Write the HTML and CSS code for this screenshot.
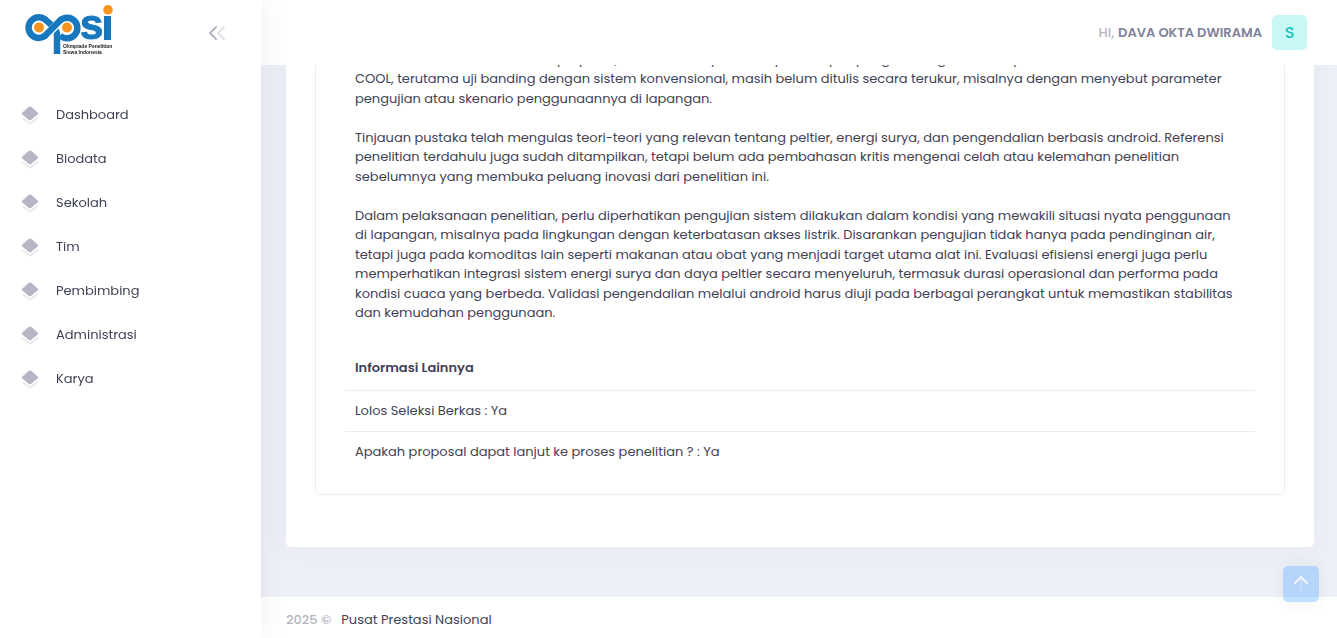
FILE: index.html
```html
<!DOCTYPE html>
<html lang="id">
<head>
    <meta charset="UTF-8">
    <meta name="viewport" content="width=device-width, initial-scale=1.0">
    <title>OPSI - Olimpiade Penelitian Siswa Indonesia</title>
    <link rel="stylesheet" href="styles.css">
</head>
<body>
    <svg class="sprite" aria-hidden="true">
        <symbol id="layers" viewBox="0 0 24 24">
            <path d="M13.200 2.200l8 6.800a1.500 1.500 0 0 1 0 2.400l-8 6.600a1.800 1.800 0 0 1-2.400 0L2.800 11.400a1.500 1.500 0 0 1 0-2.400l8-6.800a1.800 1.800 0 0 1 2.400 0z" fill="#b5b5c3"/>
            <path d="M3 15.500l8 6.200a1.600 1.600 0 0 0 2 0L21 15.500" fill="none" stroke="#e6e6ec" stroke-width="1.800"/>
        </symbol>
    </svg>

    <!-- Sidebar -->
    <aside class="sidebar">
        <div class="brand">
            <a href="#" class="brand-link" aria-label="OPSI">
                <svg class="logo" viewBox="0 0 90 54">
                    <g fill="none" stroke="#1878be" stroke-width="6.500">
                        <path d="M20.500 30.500A10.300 10.300 0 1 1 21 15.200C26 19.500 32 24 32 30V49"/>
                        <path d="M35 15.500A10.300 10.300 0 1 1 35 30.500"/>
                        <path d="M22 29.500L34.500 17" stroke="#fff" stroke-width="8"/>
                        <path d="M19 31.700L36.500 14"/>
                    </g>
                    <circle cx="14" cy="22.500" r="5" fill="#f7941e"/>
                    <circle cx="42" cy="22.500" r="5" fill="#f7941e"/>
                    <text x="55" y="34" class="logo-letter">s</text>
                    <rect x="79" y="11" width="7" height="24" fill="#1878be"/>
                    <circle cx="83" cy="4.800" r="4.800" fill="#f7941e"/>
                    <text x="38" y="43" class="logo-small">Olimpiade Penelitian</text>
                    <text x="38" y="49" class="logo-small">Siswa Indonesia</text>
                </svg>
            </a>
            <button class="toggle" type="button" aria-label="Toggle menu">
                <svg viewBox="0 0 20 20" fill="none" stroke-width="2" stroke-linecap="round" stroke-linejoin="round">
                    <path d="M9 4L3 10l6 6" stroke="#b5b5c3"/>
                    <path d="M17 4l-6 6 6 6" stroke="#e1e1e8"/>
                </svg>
            </button>
        </div>
        <nav class="menu">
            <a href="#" class="menu-link"><svg class="menu-icon"><use href="#layers"/></svg>Dashboard</a>
            <a href="#" class="menu-link"><svg class="menu-icon"><use href="#layers"/></svg>Biodata</a>
            <a href="#" class="menu-link"><svg class="menu-icon"><use href="#layers"/></svg>Sekolah</a>
            <a href="#" class="menu-link"><svg class="menu-icon"><use href="#layers"/></svg>Tim</a>
            <a href="#" class="menu-link"><svg class="menu-icon"><use href="#layers"/></svg>Pembimbing</a>
            <a href="#" class="menu-link"><svg class="menu-icon"><use href="#layers"/></svg>Administrasi</a>
            <a href="#" class="menu-link"><svg class="menu-icon"><use href="#layers"/></svg>Karya</a>
        </nav>
    </aside>

    <div class="wrapper">
        <!-- Header -->
        <header class="header">
            <a href="#" class="user">
                <span class="user-hi">Hi,</span>
                <span class="user-name">DAVA OKTA DWIRAMA</span>
                <span class="user-symbol">S</span>
            </a>
        </header>

        <!-- Content -->
        <main class="content">
            <div class="card">
                <div class="panel">
                    <div class="review">
                        <p>Catatan penilaian proposal:<br>Rumusan masalah dan isi dari proposal, namun hasilnya belum pada aspek pengembangan sistem pada<br>COOL, terutama uji banding dengan sistem konvensional, masih belum ditulis secara terukur, misalnya dengan menyebut parameter<br>pengujian atau skenario penggunaannya di lapangan.</p>
                        <p>Tinjauan pustaka telah mengulas teori-teori yang relevan tentang peltier, energi surya, dan pengendalian berbasis android. Referensi<br>penelitian terdahulu juga sudah ditampilkan, tetapi belum ada pembahasan kritis mengenai celah atau kelemahan penelitian<br>sebelumnya yang membuka peluang inovasi dari penelitian ini.</p>
                        <p>Dalam pelaksanaan penelitian, perlu diperhatikan pengujian sistem dilakukan dalam kondisi yang mewakili situasi nyata penggunaan<br>di lapangan, misalnya pada lingkungan dengan keterbatasan akses listrik. Disarankan pengujian tidak hanya pada pendinginan air,<br>tetapi juga pada komoditas lain seperti makanan atau obat yang menjadi target utama alat ini. Evaluasi efisiensi energi juga perlu<br>memperhatikan integrasi sistem energi surya dan daya peltier secara menyeluruh, termasuk durasi operasional dan performa pada<br>kondisi cuaca yang berbeda. Validasi pengendalian melalui android harus diuji pada berbagai perangkat untuk memastikan stabilitas<br>dan kemudahan penggunaan.</p>
                    </div>
                    <table class="info">
                        <thead>
                            <tr><th>Informasi Lainnya</th></tr>
                        </thead>
                        <tbody>
                            <tr><td>Lolos Seleksi Berkas : Ya</td></tr>
                            <tr><td>Apakah proposal dapat lanjut ke proses penelitian ? : Ya</td></tr>
                        </tbody>
                    </table>
                </div>
            </div>
        </main>

        <!-- Footer -->
        <footer class="footer">
            <span class="footer-year">2025 ©</span>
            <a href="#" class="footer-link">Pusat Prestasi Nasional</a>
        </footer>
    </div>

    <button class="scrolltop" type="button" aria-label="Scroll to top">
        <svg viewBox="0 0 24 24" fill="none" stroke="#fff" stroke-width="2" stroke-linecap="round" stroke-linejoin="round">
            <path d="M12 7v12" opacity="0.300"/>
            <path d="M6 11l6-6 6 6"/>
        </svg>
    </button>
</body>
</html>
```

FILE: styles.css
```css
* {
    box-sizing: border-box;
}
body {
    margin: 0;
    min-height: 100vh;
    display: flex;
    font-family: Poppins, Inter, sans-serif;
    font-size: 13px;
    line-height: 1.5;
    color: #3f4254;
    background-color: #eef0f8;
}
a {
    color: inherit;
    text-decoration: none;
}
button {
    padding: 0;
    border: 0;
    cursor: pointer;
}
.sprite {
    display: none;
}
.sidebar {
    position: relative;
    z-index: 3;
    flex: 0 0 261px;
    background-color: #fff;
    box-shadow: 0 0 28px 0 rgba(82, 63, 105, 0.08);
}
.brand {
    height: 65px;
    padding: 0 34px 5px 25px;
    display: flex;
    justify-content: space-between;
    align-items: flex-end;
}
.logo {
    display: block;
    width: 90px;
    height: 54px;
    margin-bottom: 1px;
    overflow: visible;
}
.logo-letter {
    font: bold 42px "Liberation Sans", sans-serif;
    fill: #1878be;
    stroke: #1878be;
    stroke-width: 1px;
}
.logo-small {
    font: bold 5px "Liberation Sans", sans-serif;
    fill: #222;
}
.toggle {
    width: 20px;
    height: 20px;
    margin-bottom: 17px;
    background: none;
}
.toggle svg {
    display: block;
}
.menu {
    padding: 28px 0;
}
.menu-link {
    height: 44px;
    padding: 0 20px;
    display: flex;
    align-items: center;
    gap: 16px;
}
.menu-icon {
    width: 20px;
    height: 20px;
}
.wrapper {
    flex: 1;
    min-width: 0;
    display: flex;
    flex-direction: column;
}
.header {
    position: fixed;
    top: 0;
    left: 261px;
    right: 0;
    z-index: 2;
    height: 65px;
    padding: 0 30px 0 25px;
    display: flex;
    justify-content: flex-end;
    align-items: center;
    background-color: #fff;
}
.user {
    display: flex;
    align-items: center;
    gap: 4px;
}
.user-hi {
    color: #b5b5c3;
    font-weight: 500;
}
.user-name {
    color: #7e8299;
    font-weight: 600;
}
.user-symbol {
    width: 35px;
    height: 35px;
    margin-left: 6px;
    display: flex;
    justify-content: center;
    align-items: center;
    border-radius: 5px;
    background-color: #c9f7f5;
    color: #1bc5bd;
    font-size: 16px;
    font-weight: 500;
}
.content {
    flex: 1;
    padding: 0 23px 50px 25px;
}
.card {
    padding: 0 29px 52px;
    border-radius: 0 0 5px 5px;
    background-color: #fff;
    box-shadow: 0 0 30px 0 rgba(82, 63, 105, 0.05);
}
.panel {
    padding: 30px 29px 23px;
    border: 1px solid #ebedf3;
    border-top: 0;
    border-radius: 0 0 5px 5px;
}
.review {
    padding: 0 10px;
}
.review p {
    margin: 0 0 1.5em;
}
.info {
    width: 100%;
    margin-top: 25px;
    border-collapse: collapse;
}
.info th,
.info td {
    padding: 10px;
    text-align: left;
}
.info th {
    padding-bottom: 13px;
    font-weight: 600;
}
.info td {
    border-top: 1px solid #ebedf3;
}
.footer {
    padding: 13px 25px 8px;
    display: flex;
    gap: 10px;
    line-height: 20px;
    background-color: #fff;
}
.footer-year {
    color: #b5b5c3;
    font-weight: 500;
}
.scrolltop {
    position: fixed;
    right: 18px;
    bottom: 36px;
    z-index: 4;
    width: 36px;
    height: 36px;
    display: flex;
    justify-content: center;
    align-items: center;
    border-radius: 5px;
    background-color: #3699ff;
    opacity: 0.3;
    box-shadow: 0 0 15px 1px rgba(69, 65, 78, 0.2);
}
.scrolltop svg {
    width: 24px;
    height: 24px;
}
```
